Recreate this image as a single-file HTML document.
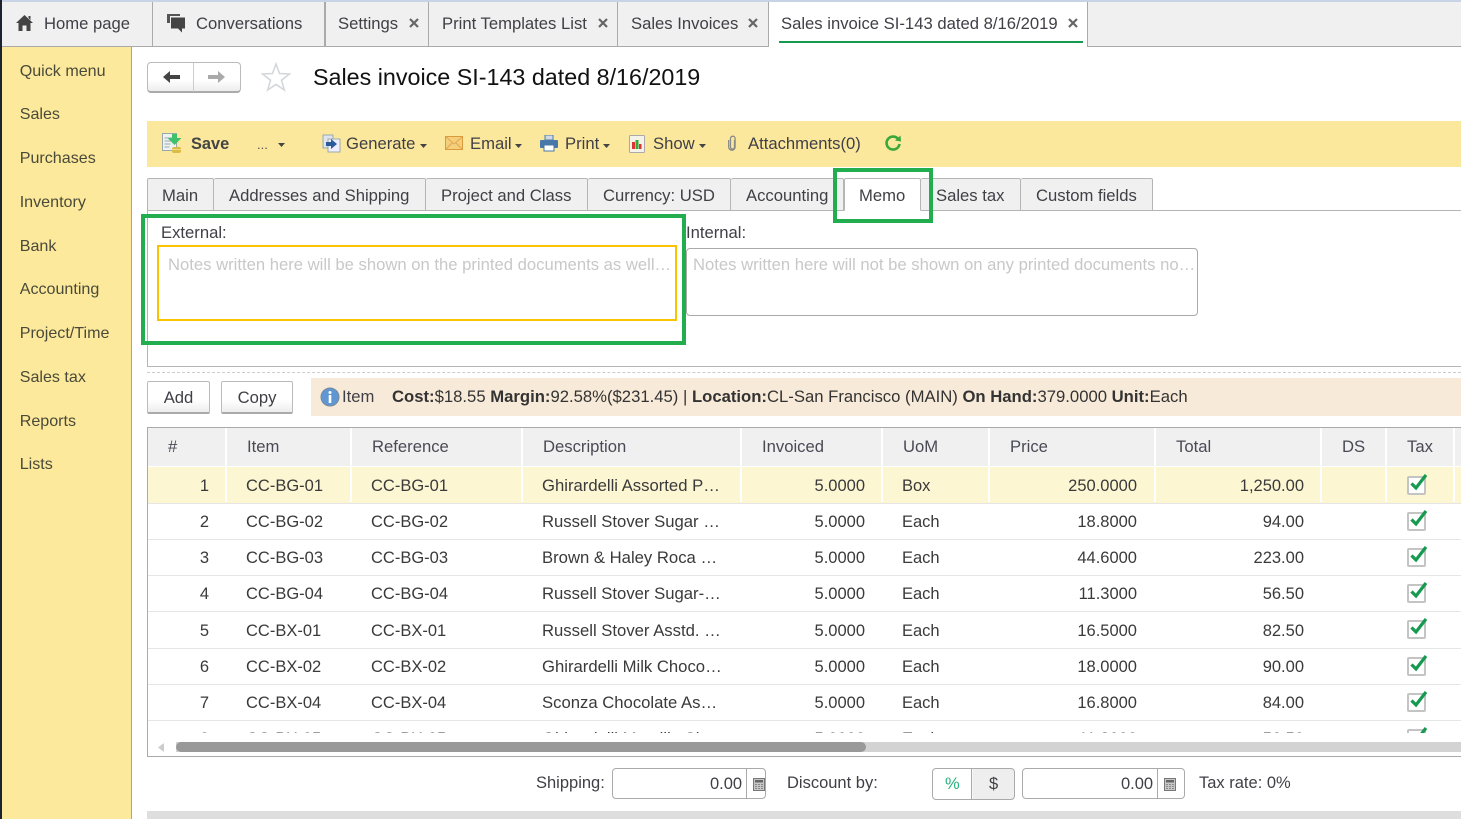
<!DOCTYPE html>
<html><head><meta charset="utf-8"><style>
html,body{margin:0;padding:0}
body{width:1461px;height:819px;overflow:hidden;position:relative;background:#fff;font-family:"Liberation Sans",sans-serif;font-size:16.65px;color:#3f3f46}
.a,.t,.r span,svg.i{position:absolute}
.a{box-sizing:border-box}
.t{white-space:nowrap;line-height:20px;margin-top:1px}
.tab{position:absolute;top:2px;height:44px;box-sizing:border-box;background:#f0f0f0;border-right:1px solid #aaa}
.nav{color:#4a4a3a;font-size:16.1px;margin-left:-.3px}
.st{position:absolute;top:178px;height:33px;box-sizing:border-box;background:#f0f0f0;border:1px solid #b5b5b5;border-bottom:1px solid #b5b5b5;border-left:0;border-radius:2px 2px 0 0}
.btn{position:absolute;box-sizing:border-box;background:linear-gradient(#fff 60%,#ededed);border:1px solid #bbb;border-bottom:2px solid #aaa;border-radius:2px;text-align:center;line-height:31px}
.hd{position:absolute;top:428px;height:38px;background:#f0f0f0;box-sizing:border-box;line-height:38px;border-right:2px solid #fff;padding-left:20px;color:#4a4a55}
.r{position:absolute;left:148px;width:1313px;height:36px;border-bottom:1px solid #e6e6e6;box-sizing:content-box}
.r span{white-space:nowrap;line-height:20px;top:8px;color:#3a3a3a;font-size:16.5px}
.r.d span{top:9px}
.r .i3{font-size:16.68px}
.n{right:1252px}.i1{left:98px}.i2{left:223px}.i3{left:394px}.i4{right:596px}.i5{left:754px}.i6{right:324px}.i7{right:157px}
.cb{position:absolute;left:1259px;top:8px;width:19px;height:19px;box-sizing:border-box;background:#fff;border:2px solid #c4c4c4;border-radius:2px}
.ck{left:1261px;top:4px}
.sep{position:absolute;top:0;width:2px;height:35px;background:#fff}
.inp{position:absolute;box-sizing:border-box;background:#fff;border:1px solid #aaa;border-radius:4px}
.lb{font-size:16.5px}
</style></head><body>
<div class="a" style="left:0;top:0;width:1461px;height:2px;background:#c9d3e6"></div>
<div class="a" style="left:0;top:2px;width:1461px;height:45px;background:#f0f0f0;border-bottom:1px solid #aaa"></div>
<div class="a" style="left:0;top:0;width:2px;height:819px;background:#1c2230;z-index:5"></div>
<div class="tab" style="left:2px;width:151px"></div>
<div class="tab" style="left:153px;width:173px;border-right:2px solid #aaa"></div>
<div class="tab" style="left:326px;width:103px"></div>
<div class="tab" style="left:429px;width:189px"></div>
<div class="tab" style="left:618px;width:151px"></div>
<div class="tab" style="left:769px;width:319px;background:#fff;border-left:0;height:45px"></div>
<div class="a" style="left:768px;top:2px;width:1px;height:44px;background:#aaa"></div>
<div class="a" style="left:779px;top:41px;width:304px;height:2px;background:#159a50"></div>
<svg class="i" style="left:15px;top:14px" width="19" height="18" viewBox="0 0 19 18"><path d="M9.5 1 L1 9 L3.5 9 L3.5 17 L7.5 17 L7.5 11.5 L11.5 11.5 L11.5 17 L15.5 17 L15.5 9 L18 9 Z M13.5 2 h2 v4 l-2-2z" fill="#444"/></svg>
<span class="t" style="left:44px;top:13px">Home page</span>
<svg class="i" style="left:166px;top:13px" width="20" height="20" viewBox="0 0 20 20"><path d="M1 1h13v2H4v7H1z" fill="#555"/><path d="M5 4.500h14v11h-3v4l-4-4H5z" fill="#444"/></svg>
<span class="t" style="left:196px;top:13px">Conversations</span>
<span class="t" style="left:338px;top:13px">Settings</span>
<span class="t" style="left:442px;top:13px">Print Templates List</span>
<span class="t" style="left:631px;top:13px">Sales Invoices</span>
<span class="t" style="left:781px;top:13px">Sales invoice SI-143 dated 8/16/2019</span>
<svg class="i" style="left:409px;top:18px" width="10" height="10"><path d="M1 1L9 9M9 1L1 9" stroke="#666" stroke-width="2.200"/></svg>
<svg class="i" style="left:598px;top:18px" width="10" height="10"><path d="M1 1L9 9M9 1L1 9" stroke="#666" stroke-width="2.200"/></svg>
<svg class="i" style="left:748px;top:18px" width="10" height="10"><path d="M1 1L9 9M9 1L1 9" stroke="#666" stroke-width="2.200"/></svg>
<svg class="i" style="left:1068px;top:18px" width="10" height="10"><path d="M1 1L9 9M9 1L1 9" stroke="#666" stroke-width="2.200"/></svg>

<div class="a" style="left:2px;top:47px;width:130px;height:772px;background:#fce99b;border-right:1px solid #c8a92a"></div>
<span class="t nav" style="left:20px;top:60px">Quick menu</span>
<span class="t nav" style="left:20px;top:103px">Sales</span>
<span class="t nav" style="left:20px;top:147px">Purchases</span>
<span class="t nav" style="left:20px;top:191px">Inventory</span>
<span class="t nav" style="left:20px;top:235px">Bank</span>
<span class="t nav" style="left:20px;top:278px">Accounting</span>
<span class="t nav" style="left:20px;top:322px">Project/Time</span>
<span class="t nav" style="left:20px;top:366px">Sales tax</span>
<span class="t nav" style="left:20px;top:410px">Reports</span>
<span class="t nav" style="left:20px;top:453px">Lists</span>

<div class="btn" style="left:147px;top:62px;width:94px;height:31px;border-radius:4px"></div>
<div class="a" style="left:193px;top:63px;width:1px;height:29px;background:#ccc"></div>
<svg class="i" style="left:162px;top:70px" width="18" height="14"><path d="M1 7L8 1V5H18V9H8V13Z" fill="#444"/></svg>
<svg class="i" style="left:208px;top:70px" width="18" height="14"><path d="M17 7L10 1V5H0V9H10V13Z" fill="#aaa"/></svg>
<svg class="i" style="left:261px;top:62px" width="30" height="30" viewBox="0 0 30 30"><path d="M15 2L18.500 11.500 28.500 12 20.500 18.200 23.300 28 15 22.400 6.700 28 9.500 18.200 1.500 12 11.500 11.500Z" fill="#fff" stroke="#d4d8dc" stroke-width="1.600"/></svg>
<span class="t" style="left:313px;top:63px;font-size:23.3px;line-height:26px;color:#111">Sales invoice SI-143 dated 8/16/2019</span>

<div class="a" style="left:147px;top:121px;width:1314px;height:46px;background:#fce89c"></div>
<svg class="i" style="left:161px;top:132px" width="22" height="22" viewBox="0 0 22 22"><rect x="1.500" y="1.500" width="14" height="17" fill="#eef2f2" stroke="#9aa8ac"/><path d="M3.500 6h8M3.500 9h6M3.500 12h6M3.500 15h5" stroke="#9aa8ac"/><path d="M11 2h5v4h4.500l-7 7-7-7H11z" fill="#3fc06a"/><rect x="11" y="15" width="9" height="6" rx="2" fill="#dcbc48"/><path d="M11 17.500h9" stroke="#f0dc80"/></svg>
<span class="t" style="left:191px;top:133px;font-weight:bold;color:#444;font-size:16.4px">Save</span>
<span class="t" style="left:257px;top:134px;font-size:13px;color:#555">...</span>
<svg class="i" style="left:278px;top:143px" width="7" height="4"><path d="M0 0H7L3.500 4Z" fill="#444"/></svg>
<svg class="i" style="left:322px;top:134px" width="19" height="19" viewBox="0 0 19 19"><rect x="1" y="1" width="10" height="13" fill="#dfe4ee" stroke="#9aa"/><rect x="6" y="5" width="12" height="13" fill="#eef" stroke="#9aa"/><path d="M4 8h5V5l6 5-6 5v-3H4z" fill="#2a5c9a"/></svg>
<span class="t" style="left:346px;top:133px">Generate</span>
<svg class="i" style="left:420px;top:144px" width="7" height="4"><path d="M0 0H7L3.500 4Z" fill="#444"/></svg>
<svg class="i" style="left:445px;top:136px" width="18" height="14" viewBox="0 0 18 14"><rect x=".5" y=".5" width="17" height="13" fill="#f5cf7c" stroke="#d89a3c"/><path d="M1 1l8 7 8-7M1 13l6-6M17 13l-6-6" fill="none" stroke="#dfa850"/></svg>
<span class="t" style="left:470px;top:133px">Email</span>
<svg class="i" style="left:515px;top:144px" width="7" height="4"><path d="M0 0H7L3.500 4Z" fill="#444"/></svg>
<svg class="i" style="left:540px;top:135px" width="18" height="17" viewBox="0 0 18 17"><path d="M5 0h8v5H5z" fill="#cfd8e4" stroke="#4d7ba8"/><rect y="5" width="18" height="8" rx="1" fill="#4878a8"/><rect x="4" y="10" width="10" height="6" fill="#fff" stroke="#4878a8"/></svg>
<span class="t" style="left:565px;top:133px">Print</span>
<svg class="i" style="left:603px;top:144px" width="7" height="4"><path d="M0 0H7L3.500 4Z" fill="#444"/></svg>
<svg class="i" style="left:629px;top:135px" width="16" height="18" viewBox="0 0 16 18"><rect x=".5" y=".5" width="15" height="17" rx="1" fill="#f5f2ea" stroke="#aaa"/><rect x="3" y="7" width="3" height="7" fill="#d33"/><rect x="6.500" y="5" width="3" height="9" fill="#3a3"/><rect x="10" y="9" width="2.500" height="5" fill="#d33"/></svg>
<span class="t" style="left:653px;top:133px">Show</span>
<svg class="i" style="left:699px;top:144px" width="7" height="4"><path d="M0 0H7L3.500 4Z" fill="#444"/></svg>
<svg class="i" style="left:727px;top:135px" width="11" height="17" viewBox="0 0 11 17"><path d="M7.500 5v7a2 2 0 0 1-4 0V3.500a2.300 2.300 0 0 1 4.600 0V12a3.200 3.200 0 0 1-6.400 0V5" fill="none" stroke="#8a8a86" stroke-width="1.300"/></svg>
<span class="t" style="left:748px;top:133px">Attachments(0)</span>
<svg class="i" style="left:884px;top:134px" width="18" height="18" viewBox="0 0 18 18"><path d="M14.500 5.500A6.500 6.500 0 1 0 15.500 10" fill="none" stroke="#3aa83a" stroke-width="2.600"/><path d="M11 6.500L17 7.500 16.500 1.500Z" fill="#3aa83a"/></svg>

<div class="a" style="left:147px;top:210px;width:1314px;height:157px;border-top:1px solid #b5b5b5;border-left:1px solid #b5b5b5;border-bottom:1px solid #b5b5b5"></div>
<div class="a" style="left:147px;top:372px;width:1314px;height:0;border-top:1px dashed #ccc"></div>
<div class="st" style="left:147px;width:67px;border-left:1px solid #b5b5b5"></div><span class="t" style="left:162px;top:185px">Main</span>
<div class="st" style="left:214px;width:212px"></div><span class="t" style="left:229px;top:185px">Addresses and Shipping</span>
<div class="st" style="left:426px;width:162px"></div><span class="t" style="left:441px;top:185px">Project and Class</span>
<div class="st" style="left:588px;width:143px"></div><span class="t" style="left:603px;top:185px">Currency: USD</span>
<div class="st" style="left:731px;width:113px"></div><span class="t" style="left:746px;top:185px">Accounting</span>
<div class="st" style="left:844px;width:77px;background:#fff;border-left:1px solid #b5b5b5;border-bottom:1px solid #fff"></div><span class="t" style="left:859px;top:185px">Memo</span>
<div class="st" style="left:921px;width:100px"></div><span class="t" style="left:936px;top:185px">Sales tax</span>
<div class="st" style="left:1021px;width:132px"></div><span class="t" style="left:1036px;top:185px">Custom fields</span>
<div class="a" style="left:833px;top:168px;width:100px;height:55px;border:4px solid #22ad4e;z-index:3"></div>

<span class="t" style="left:161px;top:222px">External:</span>
<div class="a" style="left:157px;top:245px;width:520px;height:76px;border:2px solid #fbc200;background:#fff"></div>
<span class="t" style="left:168px;top:254px;color:#c8c8c8">Notes written here will be shown on the printed documents as well…</span>
<div class="a" style="left:141px;top:214px;width:545px;height:131px;border:4px solid #22ad4e;z-index:3"></div>
<span class="t" style="left:686px;top:222px">Internal:</span>
<div class="inp" style="left:686px;top:248px;width:512px;height:68px"></div>
<span class="t" style="left:693px;top:254px;color:#c8c8c8">Notes written here will not be shown on any printed documents no…</span>

<div class="btn" style="left:147px;top:381px;width:63px;height:33px;padding-top:0">Add</div>
<div class="btn" style="left:221px;top:381px;width:72px;height:33px;padding-top:0">Copy</div>
<div class="a" style="left:311px;top:378px;width:1150px;height:38px;background:#f8ead8"></div>
<svg class="i" style="left:320px;top:387px" width="20" height="20" viewBox="0 0 20 20"><circle cx="10" cy="10" r="9" fill="#5f97d2" stroke="#7a8a9a"/><circle cx="10" cy="5.500" r="1.500" fill="#fff"/><rect x="8.700" y="8" width="2.600" height="8" fill="#fff"/></svg>
<span class="t" style="left:342px;top:386px">Item</span>
<span class="t" style="left:392px;top:386px;color:#333;font-size:16.68px"><b>Cost:</b>$18.55 <b>Margin:</b>92.58%($231.45) | <b>Location:</b>CL-San Francisco (MAIN) <b>On Hand:</b>379.0000 <b>Unit:</b>Each</span>

<div class="a" style="left:147px;top:427px;width:1314px;height:330px;border-top:1px solid #aaa;border-left:1px solid #aaa;border-bottom:1px solid #aaa"></div>
<div class="hd" style="left:148px;width:79px">#</div>
<div class="hd" style="left:227px;width:125px">Item</div>
<div class="hd" style="left:352px;width:171px">Reference</div>
<div class="hd" style="left:523px;width:219px">Description</div>
<div class="hd" style="left:742px;width:141px">Invoiced</div>
<div class="hd" style="left:883px;width:107px">UoM</div>
<div class="hd" style="left:990px;width:166px">Price</div>
<div class="hd" style="left:1156px;width:166px">Total</div>
<div class="hd" style="left:1322px;width:65px">DS</div>
<div class="hd" style="left:1387px;width:68px">Tax</div>
<div class="hd" style="left:1455px;width:6px;padding:0;border:0"></div>

<div class="a" style="left:148px;top:467px;width:1313px;height:266px;overflow:hidden">
<div class="r d" style="left:0;top:0;height:36px;background:#fdf6d3"><i class="sep" style="left:77px"></i><i class="sep" style="left:202px"></i><i class="sep" style="left:373px"></i><i class="sep" style="left:592px"></i><i class="sep" style="left:733px"></i><i class="sep" style="left:840px"></i><i class="sep" style="left:1006px"></i><i class="sep" style="left:1172px"></i><i class="sep" style="left:1237px"></i><i class="sep" style="left:1305px"></i><span class="n">1</span><span class="i1">CC-BG-01</span><span class="i2">CC-BG-01</span><span class="i3">Ghirardelli Assorted P…</span><span class="i4">5.0000</span><span class="i5">Box</span><span class="i6">250.0000</span><span class="i7">1,250.00</span><i class="cb" style="top:9px"></i><svg class="i ck" style="top:5px" width="20" height="20"><path d="M2.500 11.500l4.500 4.500 10-13" fill="none" stroke="#159a50" stroke-width="3.200"/></svg></div>
<div class="r" style="left:0;top:37px;height:35px"><span class="n">2</span><span class="i1">CC-BG-02</span><span class="i2">CC-BG-02</span><span class="i3">Russell Stover Sugar …</span><span class="i4">5.0000</span><span class="i5">Each</span><span class="i6">18.8000</span><span class="i7">94.00</span><i class="cb"></i><svg class="i ck" width="20" height="20"><path d="M2.500 11.500l4.500 4.500 10-13" fill="none" stroke="#159a50" stroke-width="3.200"/></svg></div>
<div class="r" style="left:0;top:73px;height:35px"><span class="n">3</span><span class="i1">CC-BG-03</span><span class="i2">CC-BG-03</span><span class="i3">Brown &amp; Haley Roca …</span><span class="i4">5.0000</span><span class="i5">Each</span><span class="i6">44.6000</span><span class="i7">223.00</span><i class="cb"></i><svg class="i ck" width="20" height="20"><path d="M2.500 11.500l4.500 4.500 10-13" fill="none" stroke="#159a50" stroke-width="3.200"/></svg></div>
<div class="r" style="left:0;top:109px;height:35px"><span class="n">4</span><span class="i1">CC-BG-04</span><span class="i2">CC-BG-04</span><span class="i3">Russell Stover Sugar-…</span><span class="i4">5.0000</span><span class="i5">Each</span><span class="i6">11.3000</span><span class="i7">56.50</span><i class="cb"></i><svg class="i ck" width="20" height="20"><path d="M2.500 11.500l4.500 4.500 10-13" fill="none" stroke="#159a50" stroke-width="3.200"/></svg></div>
<div class="r d" style="left:0;top:145px;height:36px"><span class="n">5</span><span class="i1">CC-BX-01</span><span class="i2">CC-BX-01</span><span class="i3">Russell Stover Asstd. …</span><span class="i4">5.0000</span><span class="i5">Each</span><span class="i6">16.5000</span><span class="i7">82.50</span><i class="cb"></i><svg class="i ck" width="20" height="20"><path d="M2.500 11.500l4.500 4.500 10-13" fill="none" stroke="#159a50" stroke-width="3.200"/></svg></div>
<div class="r" style="left:0;top:182px;height:35px"><span class="n">6</span><span class="i1">CC-BX-02</span><span class="i2">CC-BX-02</span><span class="i3">Ghirardelli Milk Choco…</span><span class="i4">5.0000</span><span class="i5">Each</span><span class="i6">18.0000</span><span class="i7">90.00</span><i class="cb"></i><svg class="i ck" width="20" height="20"><path d="M2.500 11.500l4.500 4.500 10-13" fill="none" stroke="#159a50" stroke-width="3.200"/></svg></div>
<div class="r" style="left:0;top:218px;height:35px"><span class="n">7</span><span class="i1">CC-BX-04</span><span class="i2">CC-BX-04</span><span class="i3">Sconza Chocolate As…</span><span class="i4">5.0000</span><span class="i5">Each</span><span class="i6">16.8000</span><span class="i7">84.00</span><i class="cb"></i><svg class="i ck" width="20" height="20"><path d="M2.500 11.500l4.500 4.500 10-13" fill="none" stroke="#159a50" stroke-width="3.200"/></svg></div>
<div class="r" style="left:0;top:254px;height:35px"><span class="n">8</span><span class="i1">CC-BX-05</span><span class="i2">CC-BX-05</span><span class="i3">Ghirardelli Metallic Ch…</span><span class="i4">5.0000</span><span class="i5">Each</span><span class="i6">11.3000</span><span class="i7">56.50</span><i class="cb"></i><svg class="i ck" width="20" height="20"><path d="M2.500 11.500l4.500 4.500 10-13" fill="none" stroke="#159a50" stroke-width="3.200"/></svg></div>
</div>
<div class="a" style="left:176px;top:742px;width:1285px;height:10px;background:#d3d3d3"></div>
<div class="a" style="left:176px;top:742px;width:690px;height:10px;background:#999;border-radius:5px"></div>
<svg class="i" style="left:157px;top:743px" width="8" height="9"><path d="M7 0V9L1 4.500Z" fill="#ccc"/></svg>

<span class="t lb" style="left:536px;top:772px">Shipping:</span>
<div class="inp" style="left:612px;top:768px;width:154px;height:31px"></div>
<div class="a" style="left:746px;top:768px;width:1px;height:31px;background:#aaa"></div>
<span class="t lb" style="left:710px;top:773px">0.00</span>
<svg class="i" style="left:753px;top:778px" width="12" height="13"><rect x=".5" y=".5" width="11" height="12" fill="#c8c8c8" stroke="#777"/><rect x="2" y="2" width="8" height="2.500" fill="#666"/><path d="M2 6.500h8M2 8.500h8M2 10.500h8" stroke="#888" stroke-dasharray="2 1"/></svg>
<span class="t lb" style="left:787px;top:772px">Discount by:</span>
<div class="inp" style="left:932px;top:768px;width:83px;height:32px;background:linear-gradient(90deg,#fff 49%,#eee 49%)"></div>
<div class="a" style="left:971px;top:768px;width:1px;height:32px;background:#aaa"></div>
<span class="t lb" style="left:945px;top:773px;color:#29b17f">%</span>
<span class="t lb" style="left:989px;top:773px">$</span>
<div class="inp" style="left:1022px;top:768px;width:163px;height:31px"></div>
<div class="a" style="left:1157px;top:768px;width:1px;height:31px;background:#aaa"></div>
<span class="t lb" style="left:1121px;top:773px">0.00</span>
<svg class="i" style="left:1164px;top:778px" width="12" height="13"><rect x=".5" y=".5" width="11" height="12" fill="#c8c8c8" stroke="#777"/><rect x="2" y="2" width="8" height="2.500" fill="#666"/><path d="M2 6.500h8M2 8.500h8M2 10.500h8" stroke="#888" stroke-dasharray="2 1"/></svg>
<span class="t lb" style="left:1199px;top:772px">Tax rate: 0%</span>
<div class="a" style="left:147px;top:811px;width:1314px;height:8px;background:#dedede"></div>
</body></html>
